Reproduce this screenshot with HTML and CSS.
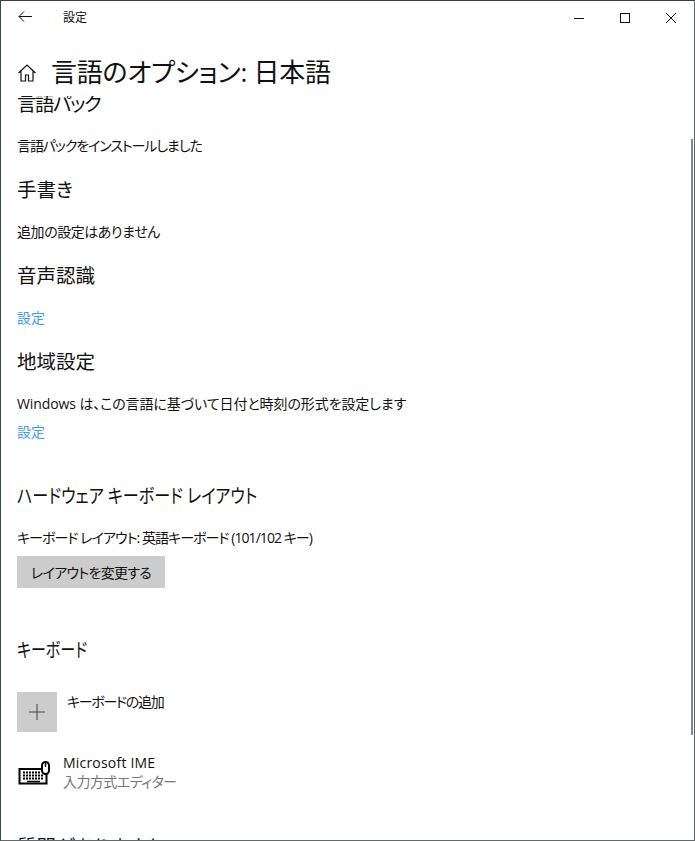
FILE: index.html
```html
<!DOCTYPE html>
<html lang="ja">
<head>
<meta charset="utf-8">
<title>設定</title>
<link rel="stylesheet" href="styles.css">
</head>
<body>
<div class="window">
  <header class="titlebar">
    <svg class="back" width="16" height="16" viewBox="0 0 16 16"><path d="M2 7.500H15M7 2.500L2 7.500l5 5" fill="none" stroke="#111" stroke-width="1"/></svg>
    <span class="apptitle">設定</span>
    <div class="controls">
      <svg class="ctl" width="46" height="32" viewBox="0 0 46 32"><path d="M18 17.500h10" stroke="#111" fill="none"/></svg>
      <svg class="ctl" width="46" height="32" viewBox="0 0 46 32"><rect x="18.500" y="12.500" width="9" height="9" stroke="#111" fill="none"/></svg>
      <svg class="ctl" width="46" height="32" viewBox="0 0 46 32"><path d="M18 12l10 10M28 12L18 22" stroke="#111" fill="none"/></svg>
    </div>
  </header>
  <div class="pagehead">
    <svg class="home" width="20" height="20" viewBox="0 0 20 20"><path d="M1.500 10L10 2l8.500 8M4 8v10h4.500v-6h3v6H16V8" fill="none" stroke="#111" stroke-width="1.200"/></svg>
    <h1 class="pagetitle">言語のオプション: 日本語</h1>
  </div>
  <main class="content">
    <section class="sec first">
      <h2 class="sectitle tight-a">言語パック</h2>
      <p class="text tight-b">言語パックをインストールしました</p>
    </section>
    <section class="sec">
      <h2 class="sectitle">手書き</h2>
      <p class="text tight-c">追加の設定はありません</p>
    </section>
    <section class="sec">
      <h2 class="sectitle">音声認識</h2>
      <a class="link">設定</a>
    </section>
    <section class="sec region">
      <h2 class="sectitle">地域設定</h2>
      <p class="text tight-e">Windows は、この言語に基づいて日付と時刻の形式を設定します</p>
      <a class="link tight">設定</a>
    </section>
    <section class="sec hw">
      <h2 class="sectitle squeeze-hw">ハードウェア キーボード レイアウト</h2>
      <p class="text tight-d">キーボード レイアウト: 英語キーボード (101/102 キー)</p>
      <button class="btn">レイアウトを変更する</button>
    </section>
    <section class="sec kb">
      <h2 class="sectitle squeeze-kb">キーボード</h2>
      <div class="addrow">
        <span class="addicon"><svg width="16" height="16" viewBox="0 0 16 16"><path d="M8 0v16M0 8h16" stroke="#444" fill="none"/></svg></span>
        <span class="addlabel">キーボードの追加</span>
      </div>
      <div class="imerow">
        <svg class="kbicon" width="32" height="24" viewBox="0 0 32 24"><path d="M23 8H1.500v14.500h27V13" fill="none" stroke="#000" stroke-width="2"/><path d="M5 11.500h18M5 14.500h20M5 17.500h20" fill="none" stroke="#000" stroke-width="2" stroke-dasharray="2 1"/><path d="M9 20.500h13" fill="none" stroke="#000" stroke-width="1.500"/><rect x="24" y="1" width="7" height="12" rx="3.500" fill="#fff" stroke="#000" stroke-width="2"/><path d="M27.500 2v4" stroke="#000" stroke-width="1.500"/></svg>
        <div class="imetext">
          <span class="imename">Microsoft IME</span>
          <span class="imesub">入力方式エディター</span>
        </div>
      </div>
    </section>
    <h2 class="sectitle clipped">質問がありますか?</h2>
  </main>
  <div class="scrollthumb"></div>
</div>
</body>
</html>
```

FILE: styles.css
```css
html, body { margin: 0; padding: 0; height: 100%; overflow: hidden; background: #fff; }
* { box-sizing: border-box; }
body { font-family: "Open Sans", "Noto Sans CJK JP", sans-serif; font-feature-settings: "palt"; color: #111; }
.window { position: relative; width: 695px; height: 841px; border: 1px solid #66696c; border-top-color: #3c4043; border-left-color: #2f4a50; overflow: hidden; background: #fff; }
.titlebar { display: flex; align-items: center; height: 32px; }
.back { margin-left: 16px; }
.apptitle { margin-left: 30px; font-size: 12px; }
.controls { margin-left: auto; display: flex; }
.pagehead { display: flex; align-items: center; height: 47px; padding-left: 16px; margin-top: 16px; }
.pagetitle { margin: 0 0 0 14px; font-size: 26px; font-weight: 400; line-height: 47px; letter-spacing: -.250px; }
.content { padding-left: 16px; height: 744px; overflow: hidden; }
.first { margin-top: -6px; }
.sectitle { margin: 0; font-size: 19.500px; font-weight: 400; line-height: 28px; height: 28px; white-space: nowrap; }
.tight-a { letter-spacing: -1.400px; }
.squeeze-hw { transform: scaleX(.825); transform-origin: left center; }
.squeeze-kb { transform: scaleX(.77); transform-origin: left center; }
.text { margin: 0; font-size: 14px; line-height: 20px; }
.tight-b { letter-spacing: -1.100px; }
.tight-c { letter-spacing: -.450px; }
.tight-d { letter-spacing: -.950px; }
.tight-e { letter-spacing: -.100px; }
.sectitle + .text, .sectitle + .link { margin-top: 18px; }
.sec { padding-bottom: 20px; }
.region { padding-bottom: 40px; }
.hw { padding-bottom: 19px; }
.link { display: block; font-size: 14px; line-height: 20px; color: #3f9bf2; }
.link.tight { margin-top: 8px; }
.btn { display: block; margin-top: 8px; width: 148px; height: 32px; border: 0; background: #ccc; font: inherit; font-size: 14px; letter-spacing: -.700px; color: #111; padding: 0; }
.kb { padding-top: 29px; padding-bottom: 19px; }
.addrow { display: flex; margin-top: 28px; }
.addicon { display: flex; align-items: center; justify-content: center; width: 40px; height: 40px; background: #ccc; }
.addlabel { margin-left: 10px; font-size: 14px; line-height: 20px; letter-spacing: -1.300px; }
.imerow { display: flex; align-items: center; margin-top: 21px; }
.kbicon { margin-left: 1px; }
.imetext { display: flex; flex-direction: column; margin-left: 13px; }
.imename { font-size: 14px; line-height: 20px; letter-spacing: .200px; }
.imesub { font-size: 14px; line-height: 20px; margin-top: -1px; letter-spacing: -.550px; color: #767676; }
.clipped { margin-top: 22px; }
.scrollthumb { position: absolute; right: 1px; top: 138px; width: 2px; height: 596px; background: #858585; }
```
